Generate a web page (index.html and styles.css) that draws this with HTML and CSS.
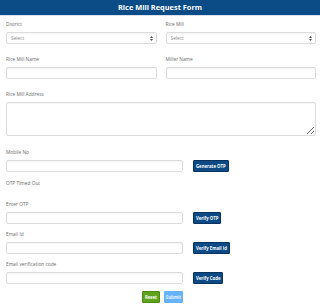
FILE: index.html
```html
<!DOCTYPE html>
<html lang="en">
<head>
  <meta charset="UTF-8">
  <meta name="viewport" content="width=device-width, initial-scale=1.0">
  <title>Rice Mill Request Form</title>
  <link rel="stylesheet" href="styles.css">
</head>
<body>
  <div class="header">Rice Mill Request Form</div>

  <form class="request-form">
    <div class="row">
      <div class="field">
        <label for="district">District</label>
        <div class="select-box">
          <select id="district"><option>Select</option></select>
          <svg class="arrows" width="3" height="5" viewBox="0 0 3 5"><path d="M0 2 L1.5 0 L3 2 Z M0 3 L1.5 5 L3 3 Z" fill="#555"/></svg>
        </div>
      </div>
      <div class="field">
        <label for="rice-mill">Rice Mill</label>
        <div class="select-box">
          <select id="rice-mill"><option>Select</option></select>
          <svg class="arrows" width="3" height="5" viewBox="0 0 3 5"><path d="M0 2 L1.5 0 L3 2 Z M0 3 L1.5 5 L3 3 Z" fill="#555"/></svg>
        </div>
      </div>
    </div>

    <div class="row">
      <div class="field">
        <label for="mill-name">Rice Mill Name</label>
        <input type="text" id="mill-name">
      </div>
      <div class="field">
        <label for="miller-name">Miller Name</label>
        <input type="text" id="miller-name">
      </div>
    </div>

    <div class="field wide">
      <label for="address">Rice Mill Address</label>
      <textarea id="address"></textarea>
    </div>

    <div class="field">
      <label for="mobile">Mobile No</label>
      <div class="input-row">
        <input type="tel" id="mobile">
        <button type="button" class="btn-blue">Generate OTP</button>
      </div>
    </div>

    <div class="status">OTP Timed Out</div>

    <div class="field tight">
      <label for="otp">Enter OTP</label>
      <div class="input-row">
        <input type="text" id="otp">
        <button type="button" class="btn-blue">Verify OTP</button>
      </div>
    </div>

    <div class="field tight">
      <label for="email">Email Id</label>
      <div class="input-row">
        <input type="email" id="email">
        <button type="button" class="btn-blue">Verify Email Id</button>
      </div>
    </div>

    <div class="field tight">
      <label for="code">Email verification code</label>
      <div class="input-row">
        <input type="text" id="code">
        <button type="button" class="btn-blue">Verify Code</button>
      </div>
    </div>

    <div class="actions">
      <button type="reset" class="btn-reset">Reset</button>
      <button type="submit" class="btn-submit" disabled>Submit</button>
    </div>
  </form>
</body>
</html>
```

FILE: styles.css
```css
body {
  margin: 0;
  font-family: "Open Sans", Arial, sans-serif;
  background-color: #fff;
  color: #666;
}

.header {
  height: 15px;
  line-height: 15px;
  background-color: #0b4c87;
  color: #fff;
  font-size: 7.4px;
  font-weight: bold;
  text-align: center;
  border-bottom: 1px solid #d8e2ee;
}

.request-form {
  padding: 5px 4px 0 6px;
  font-size: 4.8px;
  line-height: 7px;
}

.row {
  display: flex;
  gap: 9px;
}

.row .field {
  flex: 1;
}

.field {
  margin-bottom: 12px;
}

.field.wide {
  margin-bottom: 13px;
}

.field.tight {
  margin-bottom: 7px;
}

label {
  display: block;
  font-size: 4.8px;
  line-height: 7px;
  margin-bottom: 4px;
  color: #6b6b6b;
}

input,
select,
textarea {
  display: block;
  box-sizing: border-box;
  width: 100%;
  height: 12px;
  margin: 0;
  border: 1px solid #dcdcdc;
  border-radius: 2px;
  background: #fff;
  box-shadow: inset 0 1px 1px rgba(0, 0, 0, 0.04);
  font-family: "Open Sans", Arial, sans-serif;
  font-size: 4.8px;
  color: #888;
  outline: none;
}

textarea {
  height: 34px;
  resize: vertical;
}

.select-box {
  position: relative;
}

.select-box select {
  appearance: none;
  -webkit-appearance: none;
  padding: 0 4px;
}

.arrows {
  position: absolute;
  right: 4px;
  top: 3.5px;
  pointer-events: none;
}

.input-row {
  display: flex;
  align-items: center;
  gap: 10px;
}

.input-row input {
  width: 177px;
  flex: none;
}

.btn-blue {
  height: 12px;
  padding: 0 2px;
  background-color: #0d4a85;
  border: 1px solid #07335e;
  border-radius: 1px;
  color: #fff;
  font-family: "Open Sans", Arial, sans-serif;
  font-size: 4.3px;
  font-weight: bold;
  cursor: pointer;
}

.status {
  font-size: 4.8px;
  line-height: 7px;
  margin: -4px 0 14px;
}

.actions {
  display: flex;
  justify-content: center;
  gap: 4px;
  padding-left: 3px;
}

.btn-reset,
.btn-submit {
  height: 12px;
  padding: 0 2px;
  border: none;
  border-radius: 1px;
  color: #fff;
  font-family: "Open Sans", Arial, sans-serif;
  font-size: 4.3px;
  font-weight: bold;
}

.btn-reset {
  background-color: #5fa31d;
  border: 1px solid #4c8a14;
}

.btn-submit {
  background-color: #66b2fb;
  color: #e8f3ff;
}
```
